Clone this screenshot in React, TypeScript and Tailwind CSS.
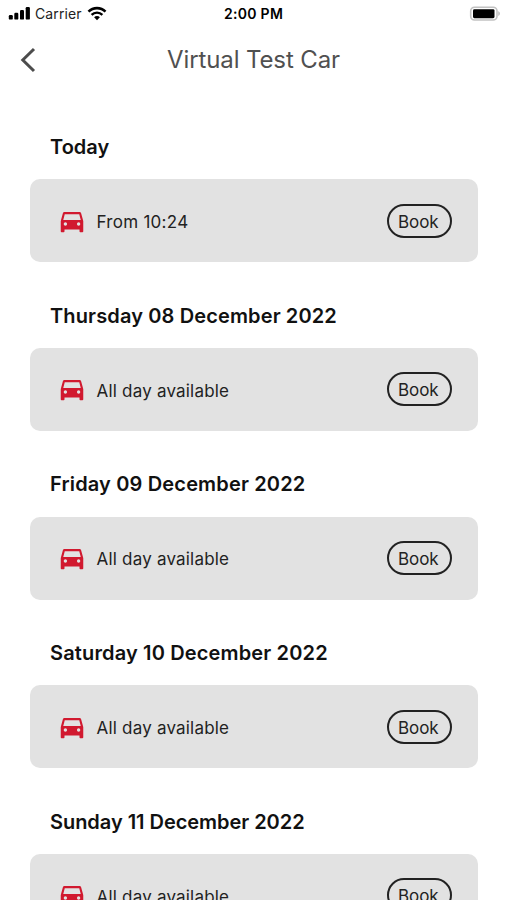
type Slot = { day: string; headingClass: string; label: string; labelClass: string };

const slots: Slot[] = [
  { day: 'Today', headingClass: 'tracking-[0px]', label: 'From 10:24', labelClass: 'tracking-[0.28px]' },
  { day: 'Thursday 08 December 2022', headingClass: 'tracking-[0.13px]', label: 'All day available', labelClass: 'tracking-[0.2px]' },
  { day: 'Friday 09 December 2022', headingClass: 'tracking-[0.16px]', label: 'All day available', labelClass: 'tracking-[0.2px]' },
  { day: 'Saturday 10 December 2022', headingClass: 'tracking-[0.15px]', label: 'All day available', labelClass: 'tracking-[0.2px]' },
  { day: 'Sunday 11 December 2022', headingClass: 'tracking-[-0.04px]', label: 'All day available', labelClass: 'tracking-[0.2px]' },
];

function CarIcon() {
  return (
    <svg width="30" height="30" viewBox="0 0 24 24" fill="#d1192f" fillRule="evenodd">
      <path d="M6.1 4.8h11.8c.65 0 1.2.42 1.4 1.02L21 12v8.1c0 .5-.4.9-.9.9h-1.2c-.5 0-.9-.4-.9-.9v-1.3H6v1.3c0 .5-.4.9-.9.9H3.9c-.5 0-.9-.4-.9-.9V12l1.7-6.18c.2-.6.75-1.02 1.4-1.02ZM6.2 6.5 5 11.1h14l-1.2-4.6ZM6.7 13a1.35 1.35 0 1 0 0 2.7 1.35 1.35 0 0 0 0-2.7ZM17.3 13a1.35 1.35 0 1 0 0 2.7 1.35 1.35 0 0 0 0-2.7Z" />
    </svg>
  );
}

function StatusBar() {
  return (
    <div className="grid h-[27px] grid-cols-3 items-center pl-2 pr-[6px] text-black">
      <div className="flex items-center">
        <svg width="23" height="13" viewBox="0 0 23 13" fill="currentColor">
          <rect x="0.8" y="8" width="4" height="4.6" rx="1.2" />
          <rect x="6.3" y="5.8" width="4" height="6.8" rx="1.2" />
          <rect x="12" y="3" width="4" height="9.6" rx="1.2" />
          <rect x="17.7" y="0" width="4.2" height="12.6" rx="1.2" />
        </svg>
        <span className="ml-1 text-[14px] leading-none tracking-[0.12px] text-[#222]">Carrier</span>
        <svg className="ml-[5px]" width="20" height="15" viewBox="0 0 20 15">
          <path d="M1.5 5.6C6.2 0.9 13.8 0.9 18.5 5.6" fill="none" stroke="currentColor" strokeWidth="2.6" />
          <path d="M4.6 8.8C7.6 5.9 12.4 5.9 15.4 8.8" fill="none" stroke="currentColor" strokeWidth="2.4" />
          <path d="M7.1 11.2C8.7 9.7 11.3 9.7 12.9 11.2L10 14.2Z" fill="currentColor" />
        </svg>
      </div>
      <span className="-ml-[2px] pt-px text-center text-[14px] font-semibold leading-none tracking-[0.3px]">2:00 PM</span>
      <svg className="justify-self-end" width="32" height="16" viewBox="0 0 32 16">
        <rect x="1.7" y="1.2" width="26.3" height="12.8" rx="3.8" fill="#fff" stroke="#c2c2c2" strokeWidth="1.6" />
        <rect x="4" y="3.2" width="21.5" height="9" rx="1.4" fill="#000" />
        <path d="M29.3 5.3c2 .7 2 3.9 0 4.6z" fill="#b5b5b5" />
      </svg>
    </div>
  );
}

function Header() {
  return (
    <header className="grid h-[66px] grid-cols-[60px_1fr_60px] items-center">
      <button type="button" aria-label="Back" className="pl-5">
        <svg width="17" height="26" viewBox="0 0 17 26" fill="none" stroke="#4c4c4c" strokeWidth="3">
          <path d="M14 2L2.8 13L14 24" />
        </svg>
      </button>
      <h1 className="text-center text-[24px] font-normal tracking-[-0.12px] text-[#505050]">Virtual Test Car</h1>
    </header>
  );
}

function SlotCard({ slot }: { slot: Slot }) {
  return (
    <section className="h-[168.6px] shrink-0">
      <h2 className={`h-[54px] whitespace-nowrap pl-5 pt-[7.8px] text-[20px] font-semibold leading-7 text-[#111] ${slot.headingClass}`}>
        {slot.day}
      </h2>
      <div className="flex h-[83px] items-center rounded-[10px] bg-[#e2e2e2] pl-[27px] pr-[26.5px]">
        <CarIcon />
        <span className={`ml-[9.5px] pt-[4px] text-[17px] text-[#222] ${slot.labelClass}`}>{slot.label}</span>
        <button type="button" className="ml-auto h-[34px] w-[64.5px] rounded-full border-2 border-[#222] pr-[2px] pt-[3px] text-[17px] leading-none tracking-[-0.05px] text-[#222]">
          Book
        </button>
      </div>
    </section>
  );
}

export default function App() {
  return (
    <div className="h-[900px] w-[507px] overflow-hidden bg-white font-['Inter','Liberation_Sans',sans-serif]">
      <StatusBar />
      <Header />
      <main className="flex flex-col pl-[30px] pr-[29px] pt-[32.4px]">
        {slots.map((slot) => (
          <SlotCard key={slot.day} slot={slot} />
        ))}
      </main>
    </div>
  );
}
